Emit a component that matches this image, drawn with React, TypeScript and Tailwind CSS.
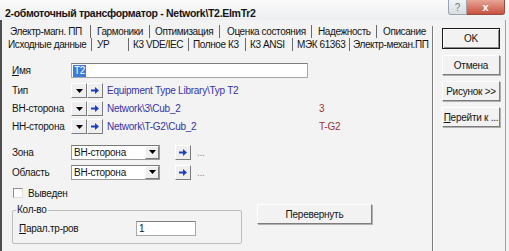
import React from "react";

const raised =
  "border border-t-white border-l-white border-r-[#7c7c7c] border-b-[#7c7c7c] bg-[#efefef]";

function BlueArrow() {
  return (
    <svg width="8" height="7" viewBox="0 0 8 7">
      <path d="M0 2.5h4V0l4 3.5L4 7V4.5H0z" fill="#1d3fc4" />
    </svg>
  );
}

function DownTri() {
  return (
    <svg width="7" height="4" viewBox="0 0 7 4">
      <path d="M0 0h7L3.5 4z" fill="#000" />
    </svg>
  );
}

function SmallBtn({ children }: { children: React.ReactNode }) {
  return (
    <div className={`flex h-[15px] w-[16px] items-center justify-center ${raised}`}>
      {children}
    </div>
  );
}

function Combo({ value }: { value: string }) {
  return (
    <div className="flex h-[15px] w-[89px] items-stretch border border-[#9a9a9a] border-t-[#7a7a7a] bg-white">
      <span className="flex-1 whitespace-nowrap pl-[2px] leading-[13px]">{value}</span>
      <div className={`flex w-[14px] items-center justify-center ${raised}`}>
        <DownTri />
      </div>
    </div>
  );
}

function PushButton({ children, width, isDefault }: { children: React.ReactNode; width: string; isDefault?: boolean }) {
  return (
    <div
      className={`flex items-center justify-center whitespace-nowrap ${width} ${
        isDefault
          ? "h-[21px] border border-[#1a1a1a] shadow-[inset_1px_1px_0_#fff,inset_-1px_-1px_0_#8a8a8a]"
          : `h-[20px] ${raised} shadow-[1px_1px_0_#b0b0b0]`
      } bg-[#f2f2f2]`}
    >
      {children}
    </div>
  );
}

const tabs1 = [
  { t: "Электр-магн. ПП", w: "w-[89px]", pl: "pl-[8px]" },
  { t: "Гармоники", w: "w-[59px]", pl: "pl-[6px]" },
  { t: "Оптимизация", w: "w-[70px]", pl: "pl-[5px]" },
  { t: "Оценка состояния", w: "w-[92px]", pl: "pl-[7px]" },
  { t: "Надежность", w: "w-[65px]", pl: "pl-[6px]" },
  { t: "Описание", w: "w-[55px]", pl: "pl-[6px]", last: true },
];

const tabs2 = [
  { t: "Исходные данные", w: "w-[90px]", pl: "pl-[6px]" },
  { t: "УР", w: "w-[37px]", pl: "pl-[5px]" },
  { t: "К3 VDE/IEC", w: "w-[60px]", pl: "pl-[4px]" },
  { t: "Полное К3", w: "w-[57px]", pl: "pl-[4px]" },
  { t: "К3 ANSI", w: "w-[47px]", pl: "pl-[4px]" },
  { t: "МЭК 61363", w: "w-[57px]", pl: "pl-[4px]" },
  { t: "Электр-механ.ПП", w: "w-[82px]", pl: "pl-[3px]", last: true },
];

function TabRow({ items }: { items: { t: string; w: string; pl: string; last?: boolean }[] }) {
  return (
    <div className="flex h-[13px]">
      {items.map((it) => (
        <div
          key={it.t}
          className={`${it.w} ${it.pl} shrink-0 whitespace-nowrap leading-[13px] tracking-[-0.4px] ${it.last ? "" : "border-r border-r-[#6a6a6a]"}`}
        >
          {it.t}
        </div>
      ))}
    </div>
  );
}

function RefRow({ label, path, tail }: { label: string; path: string; tail?: string }) {
  return (
    <div className="flex h-[15px] items-center">
      <span className="w-[59px] shrink-0 whitespace-nowrap">{label}</span>
      <SmallBtn>
        <DownTri />
      </SmallBtn>
      <SmallBtn>
        <BlueArrow />
      </SmallBtn>
      <span className="ml-[4px] w-[212px] shrink-0 whitespace-nowrap text-[#3434a6]">{path}</span>
      {tail && <span className="text-[#9e3434]">{tail}</span>}
    </div>
  );
}

export default function App() {
  return (
    <div className="flex h-[251px] w-[509px] flex-col overflow-hidden bg-[#f3f3f3] font-['Liberation_Sans',Arial,sans-serif] text-[10px] tracking-[-0.25px] text-[#141414]">
      {/* title bar */}
      <div className="flex h-[20px] shrink-0 bg-gradient-to-b from-[#fbfbfb] to-[#eceef1]">
        <div className="flex-1 whitespace-nowrap pl-[5px] pt-[6px] text-[10.5px] font-bold leading-[14px] tracking-[-0.3px]">
          2-обмоточный трансформатор - Network\T2.ElmTr2
        </div>
        <div className="mr-[4px] flex h-[15px]">
          <div className="flex w-[19px] items-center justify-center rounded-bl-[3px] border border-t-0 border-[#9aa4ae] bg-gradient-to-b from-[#f2f4f6] to-[#d8dde2] text-[10px] text-[#6d7a86]">
            ?
          </div>
          <div className="flex w-[38px] items-center justify-center rounded-br-[3px] border border-t-0 border-l-0 border-[#9b4a40] bg-gradient-to-b from-[#e8a596] to-[#c7503f] text-[11px] font-bold text-white">
            x
          </div>
        </div>
      </div>

      <div className="flex min-h-0 flex-1">
        <div className="w-[2px] shrink-0 bg-[#4e4e4e]" />

        {/* tab page */}
        <div className="flex w-[430px] shrink-0 flex-col pt-[5px]">
          <TabRow items={tabs1} />
          <TabRow items={tabs2} />

          <div className="mt-[12px] flex flex-col pl-[10px]">
            <div className="flex h-[15px] items-center">
              <span className="w-[59px] shrink-0">
                <span className="underline">И</span>мя
              </span>
              <div className="flex h-[15px] w-[237px] items-center border border-[#a8a8a8] border-t-[#7e7e7e] bg-white">
                <span className="ml-[1px] bg-[#3d7ad6] px-[1px] leading-[12px] text-white">T2</span>
              </div>
            </div>

            <div className="mt-[5px]">
              <RefRow label="Тип" path="Equipment Type Library\Typ T2" />
            </div>
            <div className="mt-[3px]">
              <RefRow label="ВН-сторона" path="Network\3\Cub_2" tail="3" />
            </div>
            <div className="mt-[3px]">
              <RefRow label="НН-сторона" path="Network\T-G2\Cub_2" tail="T-G2" />
            </div>

            <div className="mt-[10px] flex h-[16px] items-center">
              <span className="w-[59px] shrink-0">Зона</span>
              <Combo value="ВН-сторона" />
              <div className="ml-[15px]">
                <SmallBtn>
                  <BlueArrow />
                </SmallBtn>
              </div>
              <span className="ml-[6px] text-[#8a8a8a]">...</span>
            </div>
            <div className="mt-[4px] flex h-[16px] items-center">
              <span className="w-[59px] shrink-0">Область</span>
              <Combo value="ВН-сторона" />
              <div className="ml-[15px]">
                <SmallBtn>
                  <BlueArrow />
                </SmallBtn>
              </div>
              <span className="ml-[6px] text-[#8a8a8a]">...</span>
            </div>

            <div className="mt-[7px] flex h-[12px] items-center">
              <div className="ml-[1px] h-[10px] w-[10px] border border-[#8c8c8c] border-b-[#e0e0e0] border-r-[#e0e0e0] bg-white" />
              <span className="ml-[5px]">Выведен</span>
            </div>

            <div className="mt-[5px] flex items-start">
              <fieldset className="h-[40px] w-[230px] rounded-[2px] border border-[#bcbcbc] px-[3px]">
                <legend className="px-[1px] leading-[12px]">Кол-во</legend>
                <div className="mt-[5px] flex h-[14px] items-center pl-[3px]">
                  <span className="w-[117px] shrink-0">
                    <span className="underline">П</span>арал.тр-ров
                  </span>
                  <div className="flex h-[15px] w-[60px] items-center border border-[#a8a8a8] border-t-[#7e7e7e] bg-white pl-[2px]">
                    1
                  </div>
                </div>
              </fieldset>
              <div className="ml-[15px]">
                <PushButton width="w-[115px]">Перевернуть</PushButton>
              </div>
            </div>
          </div>
        </div>

        {/* buttons panel */}
        <div className="flex flex-1">
          <div className="mt-[6px] w-[1px] bg-[#7a7a7a]" />
          <div className="mt-[6px] w-[1px] bg-white" />
          <div className="flex w-[71px] flex-col gap-[6px] pl-[8px] pt-[8px]">
            <PushButton width="w-[58px]" isDefault>
              OK
            </PushButton>
            <PushButton width="w-[58px]">Отмена</PushButton>
            <PushButton width="w-[58px]">Рисунок &gt;&gt;</PushButton>
            <PushButton width="w-[58px]">
              <span>
                <span className="underline">П</span>ерейти к ...
              </span>
            </PushButton>
          </div>
          <div className="w-[1px] bg-[#a0a0a0]" />
        </div>
      </div>
    </div>
  );
}
